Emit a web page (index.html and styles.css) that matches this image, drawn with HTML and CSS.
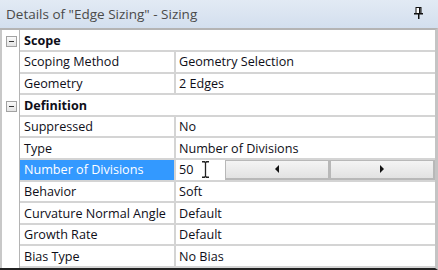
FILE: index.html
```html
<!DOCTYPE html>
<html>
<head>
    <title>Details of "Edge Sizing" - Sizing</title>
    <link rel="stylesheet" href="styles.css">
</head>
<body>
    <div class="panel">
        <div class="titlebar">
            <span class="title">Details of "Edge Sizing" - Sizing</span>
            <svg class="pin" width="9" height="12" viewBox="0 0 9 12">
                <rect x="2" y="0.5" width="5" height="6" fill="#fff" stroke="#111"/>
                <rect x="5" y="1" width="1.5" height="5" fill="#111"/>
                <rect x="0" y="6" width="9" height="1.5" fill="#111"/>
                <rect x="4" y="7" width="1.5" height="5" fill="#111"/>
            </svg>
        </div>
        <div class="sheet">
            <div class="row cat">
                <div class="gutter"><span class="toggle"></span></div>
                <div class="cat-label">Scope</div>
            </div>
            <div class="row">
                <div class="gutter"></div>
                <div class="name">Scoping Method</div>
                <div class="value">Geometry Selection</div>
            </div>
            <div class="row">
                <div class="gutter"></div>
                <div class="name">Geometry</div>
                <div class="value">2 Edges</div>
            </div>
            <div class="row cat">
                <div class="gutter"><span class="toggle"></span></div>
                <div class="cat-label">Definition</div>
            </div>
            <div class="row">
                <div class="gutter"></div>
                <div class="name">Suppressed</div>
                <div class="value">No</div>
            </div>
            <div class="row">
                <div class="gutter"></div>
                <div class="name">Type</div>
                <div class="value">Number of Divisions</div>
            </div>
            <div class="row selected">
                <div class="gutter"></div>
                <div class="name">Number of Divisions</div>
                <div class="value editor">
                    <span class="entry">50</span>
                    <svg class="ibeam" width="7" height="17" viewBox="0 0 7 17">
                        <path d="M0 0.75 H2.5 L3.5 1.75 L4.5 0.75 H7 M3.5 1.5 V15.5 M0 16.25 H2.5 L3.5 15.25 L4.5 16.25 H7" fill="none" stroke="#222" stroke-width="1.3"/>
                    </svg>
                    <span class="spin"><span class="arrow left"></span></span>
                    <span class="spin"><span class="arrow right"></span></span>
                </div>
            </div>
            <div class="row">
                <div class="gutter"></div>
                <div class="name">Behavior</div>
                <div class="value">Soft</div>
            </div>
            <div class="row">
                <div class="gutter"></div>
                <div class="name">Curvature Normal Angle</div>
                <div class="value">Default</div>
            </div>
            <div class="row">
                <div class="gutter"></div>
                <div class="name">Growth Rate</div>
                <div class="value">Default</div>
            </div>
            <div class="row">
                <div class="gutter"></div>
                <div class="name">Bias Type</div>
                <div class="value">No Bias</div>
            </div>
        </div>
    </div>
</body>
</html>
```

FILE: styles.css
```css
body { margin: 0; background: #fff; font-family: "Open Sans", "Noto Sans", sans-serif; font-size: 12.6px; color: #0e0e18; }
.panel { width: 438px; height: 270px; overflow: hidden; display: flex; flex-direction: column; }
.titlebar { height: 29px; display: flex; align-items: center; justify-content: space-between; padding: 0 15px 0 6px; background: linear-gradient(#e2eaf4, #d3dfee); box-sizing: border-box; }
.title { font-size: 13.5px; color: #4a4a4a; }
.pin { display: block; margin-top: -2px; }
.sheet { flex: 1; border-top: 2px solid #b4b4b4; border-right: 3px solid #c4c4c4; border-bottom: 2px solid #222; display: flex; flex-direction: column; }
.row { height: 21.6px; display: flex; box-sizing: border-box; }
.gutter { width: 16px; flex: none; border-left: 2px solid #c8c8c8; border-right: 1px solid #b4b4b4; display: flex; align-items: center; justify-content: center; padding-left: 1px; }
.toggle { width: 9px; height: 9px; border: 1px solid #a2a2a2; background: linear-gradient(#fafafa, #e4e4e4); position: relative; }
.toggle::after { content: ""; position: absolute; left: 2px; top: 4px; width: 5px; height: 1px; background: #333; }
.name, .value, .cat-label { display: flex; align-items: center; border-bottom: 2px solid #d4d4d4; box-sizing: border-box; padding-left: 4px; white-space: nowrap; overflow: hidden; }
.name { width: 156px; flex: none; border-right: 2px solid #d4d4d4; }
.value { flex: 1; padding-left: 3px; }
.cat-label { flex: 1; font-weight: bold; }
.selected .name { background: #3399ff; color: #fff; }
.editor { padding-right: 0; }
.entry { width: 23px; }
.ibeam { display: block; margin-right: 16px; }
.spin { flex: 1; height: 100%; box-sizing: border-box; border: 1px solid #b8b8b8; border-bottom-width: 2px; border-right-width: 2px; background: linear-gradient(#f4f4f4, #e2e2e2); display: flex; align-items: center; justify-content: center; }
.arrow { width: 0; height: 0; border-top: 4px solid transparent; border-bottom: 4px solid transparent; }
.arrow.left { border-right: 4px solid #111; }
.arrow.right { border-left: 4px solid #111; }
```
